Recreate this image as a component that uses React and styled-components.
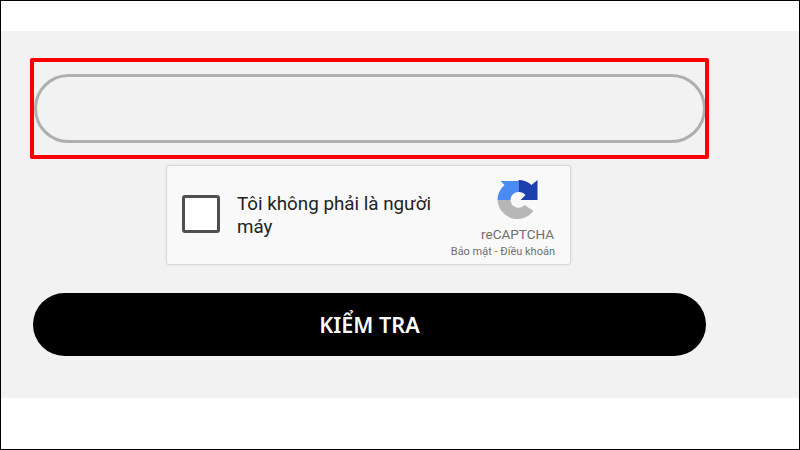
import styled, { createGlobalStyle } from "styled-components";

const GlobalStyle = createGlobalStyle`
  html, body {
    margin: 0;
    padding: 0;
    background: #fff;
  }
`;

const Page = styled.div`
  box-sizing: border-box;
  width: 800px;
  height: 450px;
  border: 1px solid #000;
  padding-top: 30px;
  overflow: hidden;
  background: #fff;
`;

const Panel = styled.div`
  height: 367px;
  box-sizing: border-box;
  padding: 43px 0 0 32px;
  background: #f2f2f2;
  display: flex;
  flex-direction: column;
  align-items: flex-start;
`;

const Field = styled.div`
  position: relative;
  width: 672px;
  height: 69px;
  margin-left: 1px;
`;

const Input = styled.input`
  display: block;
  box-sizing: border-box;
  width: 100%;
  height: 100%;
  border: 3px solid #b0aeb1;
  border-radius: 35px;
  background: #f2f2f2;
  outline: none;
`;

const Highlight = styled.div`
  position: absolute;
  top: -16px;
  left: -4px;
  right: -3px;
  bottom: -16px;
  border: 4px solid #f80000;
  border-radius: 2px;
  pointer-events: none;
`;

const Captcha = styled.div`
  box-sizing: border-box;
  width: 405px;
  height: 100px;
  margin: 22px 0 0 133px;
  padding: 0 15px 0 15px;
  display: flex;
  align-items: center;
  background: #f9f9f9;
  border: 1px solid #d8d8d8;
  border-radius: 3px;
  box-shadow: 0 0 3px rgba(0, 0, 0, 0.08);
  font-family: Roboto, sans-serif;
`;

const Checkbox = styled.div`
  box-sizing: border-box;
  flex: none;
  width: 38px;
  height: 38px;
  margin-bottom: 3px;
  background: #fff;
  border: 3px solid #4f4f4f;
  border-radius: 3px;
`;

const Label = styled.div`
  width: 215px;
  margin: 2px 0 0 17px;
  font-size: 18.8px;
  line-height: 23px;
  color: #222;
`;

const Brand = styled.div`
  margin: 8px 0 0 auto;
  display: flex;
  flex-direction: column;
  align-items: flex-end;
  color: #6f6f6f;
`;

const LogoMark = styled.svg`
  display: block;
  width: 43px;
  height: 42px;
  margin: 0 15px 4px 0;
`;

const BrandName = styled.div`
  font-size: 13.5px;
  line-height: 17px;
  margin-right: 1px;
`;

const Links = styled.div`
  margin-top: 1px;
  font-size: 11px;
  line-height: 15px;
  white-space: nowrap;
`;

const SubmitButton = styled.button`
  width: 673px;
  height: 63px;
  margin-top: 28px;
  padding: 0;
  border: none;
  border-radius: 32px;
  background: #000;
  color: #fff;
  font-family: "Noto Sans", sans-serif;
  font-size: 21.6px;
  font-weight: 600;
`;

const RecaptchaLogo = () => (
  <LogoMark viewBox="0 0 42 42">
    <path
      fill="#b7b7b7"
      d="M0 20H13A8 8 0 0 0 27 25L36 31A20 20 0 0 1 0 20z"
    />
    <path
      fill="#4a8af4"
      d="M0 20A21 21 0 0 1 7 5L3 1H21V12A8 8 0 0 0 13 20z"
    />
    <path
      fill="#1c3fae"
      d="M21 0A20 20 0 0 1 34 5L40 0V20H23L28 15A8 8 0 0 0 21 12z"
    />
  </LogoMark>
);

export default function App() {
  return (
    <>
      <GlobalStyle />
      <Page>
        <Panel>
          <Field>
            <Input type="text" aria-label="Mã kiểm tra" />
            <Highlight />
          </Field>
          <Captcha>
            <Checkbox />
            <Label>Tôi không phải là người máy</Label>
            <Brand>
              <RecaptchaLogo />
              <BrandName>reCAPTCHA</BrandName>
              <Links>Bảo mật - Điều khoản</Links>
            </Brand>
          </Captcha>
          <SubmitButton>KIỂM TRA</SubmitButton>
        </Panel>
      </Page>
    </>
  );
}
